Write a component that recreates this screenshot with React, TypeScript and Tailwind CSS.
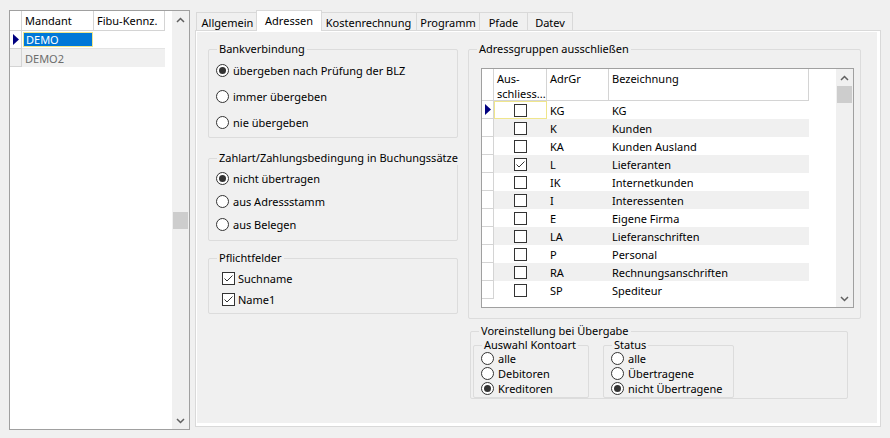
import React from "react"

const Radio = ({ checked, label }: { checked?: boolean; label: string }) => (
  <div className="flex items-center gap-[4px]">
    <span className="w-[13px] h-[13px] rounded-full border border-[#333333] bg-white flex items-center justify-center shrink-0">
      {checked && <span className="w-[7px] h-[7px] rounded-full bg-[#333333]" />}
    </span>
    <span className="whitespace-nowrap">{label}</span>
  </div>
)

const Check = ({ checked }: { checked?: boolean }) => (
  <span className="w-[13px] h-[13px] border border-[#333333] bg-white flex items-center justify-center shrink-0">
    {checked && (
      <svg width="11" height="11" viewBox="0 0 11 11">
        <path d="M1.5 5.5 L4 8 L9.5 2.5" stroke="#333333" strokeWidth="1" fill="none" />
      </svg>
    )}
  </span>
)

const GroupBox = ({ title, className, children }: { title: string; className: string; children?: React.ReactNode }) => (
  <div className={"relative border border-[#dcdcdc] rounded-[2px] " + className}>
    <span className="absolute -top-[8px] left-[8px] px-[2px] bg-[#f0f0f0] leading-[14px] whitespace-nowrap">{title}</span>
    {children}
  </div>
)

const ChevronUp = () => (
  <svg width="9" height="6" viewBox="0 0 9 6">
    <path d="M1 5 L4.5 1.5 L8 5" stroke="#606060" strokeWidth="1.5" fill="none" />
  </svg>
)

const ChevronDown = () => (
  <svg width="9" height="6" viewBox="0 0 9 6">
    <path d="M1 1 L4.5 4.5 L8 1" stroke="#606060" strokeWidth="1.5" fill="none" />
  </svg>
)

const RowArrow = () => (
  <svg width="6" height="11" viewBox="0 0 6 11">
    <path d="M0 0 L6 5.5 L0 11 Z" fill="#000080" />
  </svg>
)

const tabs: [string, number][] = [
  ["Allgemein", 62],
  ["Adressen", 62],
  ["Kostenrechnung", 96],
  ["Programm", 63],
  ["Pfade", 48],
  ["Datev", 46],
]

const groups: [string, string, boolean][] = [
  ["KG", "KG", false],
  ["K", "Kunden", false],
  ["KA", "Kunden Ausland", false],
  ["L", "Lieferanten", true],
  ["IK", "Internetkunden", false],
  ["I", "Interessenten", false],
  ["E", "Eigene Firma", false],
  ["LA", "Lieferanschriften", false],
  ["P", "Personal", false],
  ["RA", "Rechnungsanschriften", false],
  ["SP", "Spediteur", false],
]

const App = () => {
  return (
    <div className="w-[890px] h-[438px] bg-[#f0f0f0] flex text-[11px] text-black font-['Noto_Sans',sans-serif] leading-none">
      {/* Mandanten grid */}
      <div className="ml-[9px] mt-[10px] w-[181px] h-[420px] border border-[#a0a0a0] bg-white flex">
        <div className="flex-1 flex flex-col">
          <div className="flex h-[20px]">
            <div className="w-[12px] border-r border-b border-[#d4d4d4]" />
            <div className="w-[72px] border-r border-b border-[#d4d4d4] flex items-center pl-[3px]">Mandant</div>
            <div className="w-[71px] border-r border-b border-[#d4d4d4] flex items-center pl-[3px]">Fibu-Kennz.</div>
          </div>
          <div className="flex h-[18px]">
            <div className="w-[12px] border-r border-b border-[#d4d4d4] flex items-center justify-center">
              <RowArrow />
            </div>
            <div className="w-[72px] border-b border-[#e4e4e4] p-[1px]">
              <div className="h-full bg-[#0078d7] text-white flex items-center pl-[2px] border border-[#f0e68c]">DEMO</div>
            </div>
            <div className="w-[71px] border-b border-[#e4e4e4]" />
          </div>
          <div className="flex h-[18px] bg-[#f0f0f0] w-[155px]">
            <div className="w-[12px] border-r border-b border-[#d4d4d4]" />
            <div className="w-[72px] flex items-center pl-[3px] text-[#6d6d6d]">DEMO2</div>
            <div className="w-[71px]" />
          </div>
        </div>
        <div className="w-[17px] bg-[#f0f0f0] flex flex-col items-center">
          <div className="h-[17px] flex items-center justify-center"><ChevronUp /></div>
          <div className="h-[184px]" />
          <div className="h-[17px] w-[15px] bg-[#cdcdcd]" />
          <div className="flex-1" />
          <div className="h-[17px] flex items-center justify-center"><ChevronDown /></div>
        </div>
      </div>

      {/* Tab control */}
      <div className="ml-[5px] mt-[10px] w-[686px] flex flex-col">
        <div className="h-[20px] flex items-end pl-[1px]">
          {tabs.map(([name, w], i) =>
            name === "Adressen" ? (
              <div
                key={name}
                className="relative z-10 -mx-[2px] -mb-[1px] h-[21px] bg-white border border-b-0 border-[#d9d9d9] flex items-start justify-center pt-[4px]"
                style={{ width: w + 4 }}
              >
                {name}
              </div>
            ) : (
              <div
                key={name}
                className={"h-[18px] bg-[#f0f0f0] border-t border-l border-[#d9d9d9] flex items-center justify-center pt-[1px] " + (i === tabs.length - 1 ? "border-r" : "")}
                style={{ width: w }}
              >
                {name}
              </div>
            )
          )}
        </div>
        <div className="h-[397px] border border-[#d9d9d9] bg-white pt-[1px] pl-[1px] pr-[3px] pb-[3px]">
          <div className="h-full bg-[#f0f0f0] flex gap-[10px] pl-[11px] pt-[17px]">
            {/* left column */}
            <div className="w-[250px] flex flex-col">
              <GroupBox title="Bankverbindung" className="h-[89px] pt-[7px] pl-[7px]">
                <div className="h-[26px] flex items-center"><Radio checked label="übergeben nach Prüfung der BLZ" /></div>
                <div className="h-[26px] flex items-center"><Radio label="immer übergeben" /></div>
                <div className="h-[26px] flex items-center"><Radio label="nie übergeben" /></div>
              </GroupBox>
              <GroupBox title="Zahlart/Zahlungsbedingung in Buchungssätze" className="mt-[20px] h-[83px] pt-[8px] pl-[7px]">
                <div className="h-[23px] flex items-center"><Radio checked label="nicht übertragen" /></div>
                <div className="h-[23px] flex items-center"><Radio label="aus Adressstamm" /></div>
                <div className="h-[23px] flex items-center"><Radio label="aus Belegen" /></div>
              </GroupBox>
              <GroupBox title="Pflichtfelder" className="mt-[17px] h-[56px] pt-[9px] pl-[13px]">
                <div className="h-[21px] flex items-center gap-[3px]"><Check checked /><span>Suchname</span></div>
                <div className="h-[21px] flex items-center gap-[3px]"><Check checked /><span>Name1</span></div>
              </GroupBox>
            </div>

            {/* right column */}
            <div className="w-[393px] flex flex-col">
              <GroupBox title="Adressgruppen ausschließen" className="h-[270px] pt-[18px] pl-[12px]">
                <div className="w-[373px] h-[240px] border border-[#a0a0a0] bg-white flex">
                  <div className="flex-1 flex flex-col">
                    <div className="flex h-[32px]">
                      <div className="w-[12px] border-r border-b border-[#d4d4d4]" />
                      <div className="w-[53px] border-r border-b border-[#d4d4d4] pl-[3px] pt-[2px] leading-[15px]">
                        Aus-<br />schliess...
                      </div>
                      <div className="w-[62px] border-r border-b border-[#d4d4d4] pl-[3px] pt-[2px] leading-[15px]">AdrGr</div>
                      <div className="w-[200px] border-r border-b border-[#d4d4d4] pl-[3px] pt-[2px] leading-[15px]">Bezeichnung</div>
                    </div>
                    {groups.map(([code, name, checked], i) => (
                      <div key={code} className={"flex h-[18px] w-[327px] " + (i % 2 === 1 ? "bg-[#f0f0f0]" : "bg-white")}>
                        <div className="w-[12px] bg-white border-r border-b border-[#d4d4d4] flex items-center justify-center">
                          {i === 0 && <RowArrow />}
                        </div>
                        <div className={"w-[53px] flex items-center justify-center " + (i === 0 ? "border border-[#f0e68c]" : "")}>
                          <Check checked={checked} />
                        </div>
                        <div className="w-[62px] flex items-center pl-[3px]">{code}</div>
                        <div className="w-[200px] flex items-center pl-[3px]">{name}</div>
                      </div>
                    ))}
                  </div>
                  <div className="w-[17px] bg-[#f0f0f0] flex flex-col items-center">
                    <div className="h-[17px] flex items-center justify-center"><ChevronUp /></div>
                    <div className="h-[17px] w-[15px] bg-[#cdcdcd]" />
                    <div className="flex-1" />
                    <div className="h-[17px] flex items-center justify-center"><ChevronDown /></div>
                  </div>
                </div>
              </GroupBox>
              <GroupBox title="Voreinstellung bei Übergabe" className="mt-[12px] ml-[2px] w-[378px] h-[68px] pt-[13px] pl-[2px] flex gap-[14px]">
                <GroupBox title="Auswahl Kontoart" className="w-[116px] h-[53px] pt-[5px] pl-[7px]">
                  <div className="h-[15px] flex items-center"><Radio label="alle" /></div>
                  <div className="h-[15px] flex items-center"><Radio label="Debitoren" /></div>
                  <div className="h-[15px] flex items-center"><Radio checked label="Kreditoren" /></div>
                </GroupBox>
                <GroupBox title="Status" className="w-[131px] h-[53px] pt-[5px] pl-[7px]">
                  <div className="h-[15px] flex items-center"><Radio label="alle" /></div>
                  <div className="h-[15px] flex items-center"><Radio label="Übertragene" /></div>
                  <div className="h-[15px] flex items-center"><Radio checked label="nicht Übertragene" /></div>
                </GroupBox>
              </GroupBox>
            </div>
          </div>
        </div>
      </div>
    </div>
  )
}

export default App
